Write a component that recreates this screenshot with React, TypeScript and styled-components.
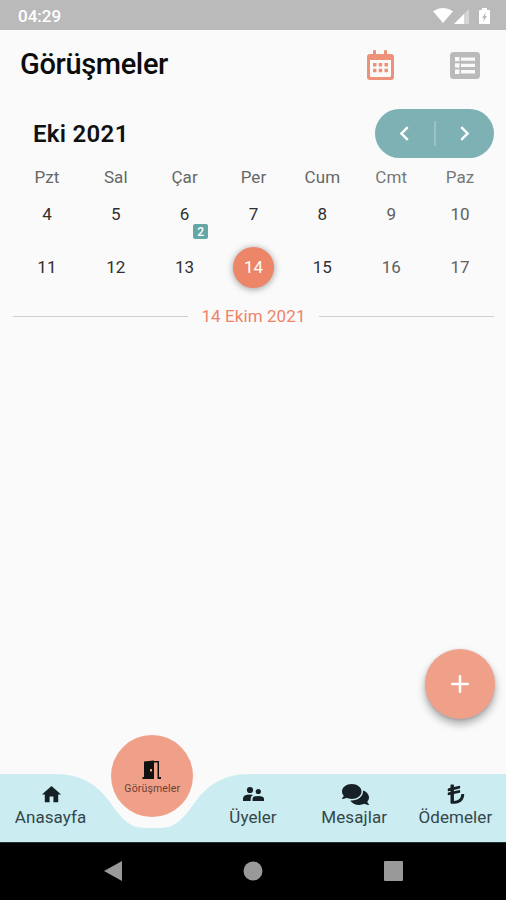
import React from "react";
import styled, { createGlobalStyle } from "styled-components";
import { FaComments, FaLiraSign } from "react-icons/fa";
import { MdHome, MdChevronLeft, MdChevronRight, MdAdd } from "react-icons/md";

const GlobalStyle = createGlobalStyle`
  * { box-sizing: border-box; }
  body { margin: 0; font-family: Roboto, sans-serif; background: #fafafa; }
  button { font: inherit; border: 0; padding: 0; background: none; color: inherit; }
  svg { display: block; flex: none; }
`;

const Screen = styled.div`
  width: 506px;
  height: 900px;
  display: flex;
  flex-direction: column;
  background: #fafafa;
  overflow: hidden;
  position: relative;
`;

const StatusBar = styled.div`
  height: 30px;
  flex: none;
  display: flex;
  align-items: center;
  justify-content: space-between;
  padding: 1px 15px 0 18px;
  background: #bababa;
  color: #fff;
  font-size: 17px;
  font-weight: 500;
`;

const Header = styled.header`
  height: 70px;
  flex: none;
  display: flex;
  align-items: center;
  padding: 0 26px 0 20px;
`;

const Title = styled.h1`
  margin: 0 0 3px;
  flex: 1;
  font-size: 29px;
  line-height: 34px;
  font-weight: 500;
  letter-spacing: -0.35px;
  color: #0c0c0c;
`;

const HeaderActions = styled.div`
  display: flex;
  align-items: center;
  gap: 56px;
`;

const MonthBar = styled.div`
  height: 66px;
  flex: none;
  display: flex;
  align-items: center;
  justify-content: space-between;
  padding: 0 12px 0 33px;
`;

const Month = styled.h2`
  margin: 2px 0 0;
  font-size: 24px;
  line-height: 28px;
  font-weight: 600;
  letter-spacing: 0.3px;
  color: #111;
`;

const Pager = styled.div`
  width: 119px;
  height: 49px;
  border-radius: 25px;
  display: flex;
  align-items: center;
  background: #7db1b4;
  color: #fff;
`;

const PagerButton = styled.button`
  flex: 1;
  display: flex;
  justify-content: center;
`;

const PagerDivider = styled.span`
  width: 2px;
  height: 25px;
  background: #9bc3c5;
`;

const Week = styled.div<{ $height: number }>`
  height: ${(p) => p.$height}px;
  flex: none;
  display: grid;
  grid-template-columns: repeat(7, 1fr);
  align-items: center;
  justify-items: center;
  padding: 0 12px;
`;

const Weekday = styled.span<{ $weekend: boolean }>`
  font-size: 17px;
  letter-spacing: 0.1px;
  margin-left: 1px;
  color: ${(p) => (p.$weekend ? "#777" : "#666")};
`;

const Day = styled.span<{ $weekend: boolean; $selected: boolean }>`
  position: relative;
  width: 41px;
  height: 41px;
  margin: 0 0 0 1px;
  border-radius: 50%;
  display: flex;
  align-items: center;
  justify-content: center;
  padding-bottom: 1px;
  font-size: 17px;
  color: ${(p) => (p.$selected ? "#fff" : p.$weekend ? "#606060" : "#303030")};
  background: ${(p) => (p.$selected ? "#ed8569" : "transparent")};
  box-shadow: ${(p) => (p.$selected ? "0 1px 7px rgba(0, 0, 0, 0.4)" : "none")};
`;

const EventBadge = styled.span`
  position: absolute;
  left: 29px;
  top: 30px;
  width: 15px;
  height: 15px;
  border-radius: 2px;
  display: flex;
  align-items: center;
  justify-content: center;
  font-size: 12px;
  font-weight: 500;
  color: #fff;
  background: #65a7a7;
`;

const SelectedDate = styled.div`
  height: 44px;
  flex: none;
  display: flex;
  align-items: center;
  gap: 13px;
  padding: 0 12px 0 13px;
  font-size: 17px;
  letter-spacing: 0.08px;
  color: #ef8367;
  &::before, &::after {
    content: "";
    flex: 1;
    height: 1px;
    background: #cecece;
  }
`;

const Agenda = styled.main`
  flex: 1;
`;

const AddButton = styled.button`
  position: absolute;
  left: 425px;
  top: 649px;
  width: 70px;
  height: 70px;
  border-radius: 50%;
  display: flex;
  align-items: center;
  justify-content: center;
  color: #fff;
  background: #f0a089;
  box-shadow: 0 5px 8px rgba(0, 0, 0, 0.32), 0 1px 3px rgba(0, 0, 0, 0.12);
`;

const BottomBar = styled.nav`
  position: relative;
  height: 68px;
  flex: none;
  display: grid;
  grid-template-columns: repeat(5, 1fr);
`;

const BarShape = styled.svg`
  position: absolute;
  inset: 0;
`;

const Tab = styled.button`
  position: relative;
  display: flex;
  flex-direction: column;
  align-items: center;
  padding-top: 9px;
  color: #172125;
`;

const TabIcon = styled.span`
  height: 24px;
  display: flex;
  align-items: center;
  margin: -1px 0 1px 2px;
`;

const TabLabel = styled.span`
  font-size: 17px;
  line-height: 20px;
  letter-spacing: 0.08px;
  color: #34474b;
`;

const ActiveTab = styled.button`
  position: relative;
  justify-self: center;
  width: 82px;
  height: 82px;
  margin: -39px 0 0 1px;
  border-radius: 50%;
  display: flex;
  flex-direction: column;
  align-items: center;
  padding-top: 25px;
  background: #f0a089;
  color: #111;
`;

const ActiveLabel = styled.span`
  font-size: 10.5px;
  line-height: 13px;
  margin-top: 2px;
  letter-spacing: 0.15px;
  color: #6b4136;
`;

const SystemBar = styled.div`
  height: 58px;
  flex: none;
  display: flex;
  align-items: center;
  justify-content: center;
  gap: 121px;
  padding-bottom: 1px;
  background: #000;
  border-top: 1px solid #253033;
  color: #999;
`;

function StatusIcons() {
  return (
    <svg width="58" height="20" viewBox="0 0 58 20" fill="#fff">
      <path d="M0 5.3Q10 -1.3 20 5.3L10 17Z" />
      <path d="M21 18 36 3v15Z" opacity=".4" />
      <path d="M21 18 31 8v10Z" />
      <path fillRule="evenodd" d="M47 4h2V2h5v2h2q1 0 1 1v12q0 1-1 1h-9q-1 0-1-1V5q0-1 1-1Zm6 2-4 6h2l-1 4 4-6h-2Z" />
    </svg>
  );
}

function CalendarIcon() {
  return (
    <svg width="27" height="31" viewBox="0 0 27 31" fill="#ee9179">
      <path fillRule="evenodd" d="M3 4h3V1q0-1 1-1h1q1 0 1 1v3h8V1q0-1 1-1h1q1 0 1 1v3h4q3 0 3 3v20q0 3-3 3H3q-3 0-3-3V7q0-3 3-3ZM3 10v16q0 1 1 1h19q1 0 1-1V10Z" />
      <path d="M6 13h3.5v3.5H6zm5.7 0h3.5v3.5h-3.5zm5.8 0H21v3.5h-3.5zM6 18.7h3.5v3.5H6zm5.7 0h3.5v3.5h-3.5zm5.8 0H21v3.5h-3.5z" />
    </svg>
  );
}

function ListIcon() {
  return (
    <svg width="30" height="27" viewBox="0 0 30 27">
      <rect width="30" height="27" rx="3.5" fill="#bababa" />
      <path fill="#fafafa" d="M5 5h4.5v4.3H5zm6 .5h14v3.3H11zM5 11.3h4.5v4.3H5zm6 .5h14v3.3H11zM5 17.6h4.5v4.3H5zm6 .5h14v3.3H11z" />
    </svg>
  );
}

function DoorIcon() {
  return (
    <svg width="20" height="20" viewBox="0 0 20 20" fill="currentColor">
      <path fillRule="evenodd" d="M2 1.5 12 .5v18.5H0.5v-2H2Zm6 7.5v2.5h2V9Z" />
      <path d="M12 1h5v16h2v2h-3.5V2.5H12Z" />
    </svg>
  );
}

function MembersIcon() {
  return (
    <svg width="21" height="24" viewBox="0 0 21 24" fill="currentColor">
      <circle cx="7" cy="8" r="3.1" />
      <circle cx="15.3" cy="9.5" r="2.6" />
      <path d="M0 19v-2.2Q0 12.6 7 12.6q1.7 0 3 .3-2.3 1.3-2.3 3.6V19Z" />
      <path d="M9.5 19v-2.1q0-3 5.8-3t5.7 3V19Z" />
    </svg>
  );
}

const weekdays = ["Pzt", "Sal", "Çar", "Per", "Cum", "Cmt", "Paz"];
const weeks = [
  [4, 5, 6, 7, 8, 9, 10],
  [11, 12, 13, 14, 15, 16, 17],
];
const events: Record<number, number> = { 6: 2 };
const selectedDay = 14;

function NavTab({ icon, label }: { icon: React.ReactNode; label: string }) {
  return (
    <Tab>
      <TabIcon>{icon}</TabIcon>
      <TabLabel>{label}</TabLabel>
    </Tab>
  );
}

export default function App() {
  return (
    <Screen>
      <GlobalStyle />
      <StatusBar>
        <span>04:29</span>
        <StatusIcons />
      </StatusBar>
      <Header>
        <Title>Görüşmeler</Title>
        <HeaderActions>
          <CalendarIcon />
          <ListIcon />
        </HeaderActions>
      </Header>
      <MonthBar>
        <Month>Eki 2021</Month>
        <Pager>
          <PagerButton aria-label="Önceki"><MdChevronLeft size={29} /></PagerButton>
          <PagerDivider />
          <PagerButton aria-label="Sonraki"><MdChevronRight size={29} /></PagerButton>
        </Pager>
      </MonthBar>
      <Week $height={22}>
        {weekdays.map((d, i) => <Weekday key={d} $weekend={i > 4}>{d}</Weekday>)}
      </Week>
      {weeks.map((week) => (
        <Week key={week[0]} $height={53}>
          {week.map((d, i) => (
            <Day key={d} $weekend={i > 4} $selected={d === selectedDay}>
              {d}
              {events[d] && <EventBadge>{events[d]}</EventBadge>}
            </Day>
          ))}
        </Week>
      ))}
      <SelectedDate>14 Ekim 2021</SelectedDate>
      <Agenda />
      <AddButton aria-label="Ekle"><MdAdd size={30} /></AddButton>
      <BottomBar>
        <BarShape width="506" height="68" viewBox="0 0 506 68" fill="#cbecf0">
          <path d="M0 0H55C83 0 99 12 112 31C122 45 130 54 145 54H160C175 54 183 45 193 31C206 12 222 0 250 0H506V68H0Z" />
        </BarShape>
        <NavTab icon={<MdHome size={23} />} label="Anasayfa" />
        <ActiveTab>
          <DoorIcon />
          <ActiveLabel>Görüşmeler</ActiveLabel>
        </ActiveTab>
        <NavTab icon={<MembersIcon />} label="Üyeler" />
        <NavTab icon={<FaComments size={27} />} label="Mesajlar" />
        <NavTab icon={<FaLiraSign size={22} />} label="Ödemeler" />
      </BottomBar>
      <SystemBar>
        <svg width="19" height="22" fill="currentColor"><path d="M19 1v20L1 11Z" /></svg>
        <svg width="20" height="20" fill="currentColor"><circle cx="10" cy="10" r="9.5" /></svg>
        <svg width="19" height="20" fill="currentColor"><rect width="19" height="20" rx="1" /></svg>
      </SystemBar>
    </Screen>
  );
}
